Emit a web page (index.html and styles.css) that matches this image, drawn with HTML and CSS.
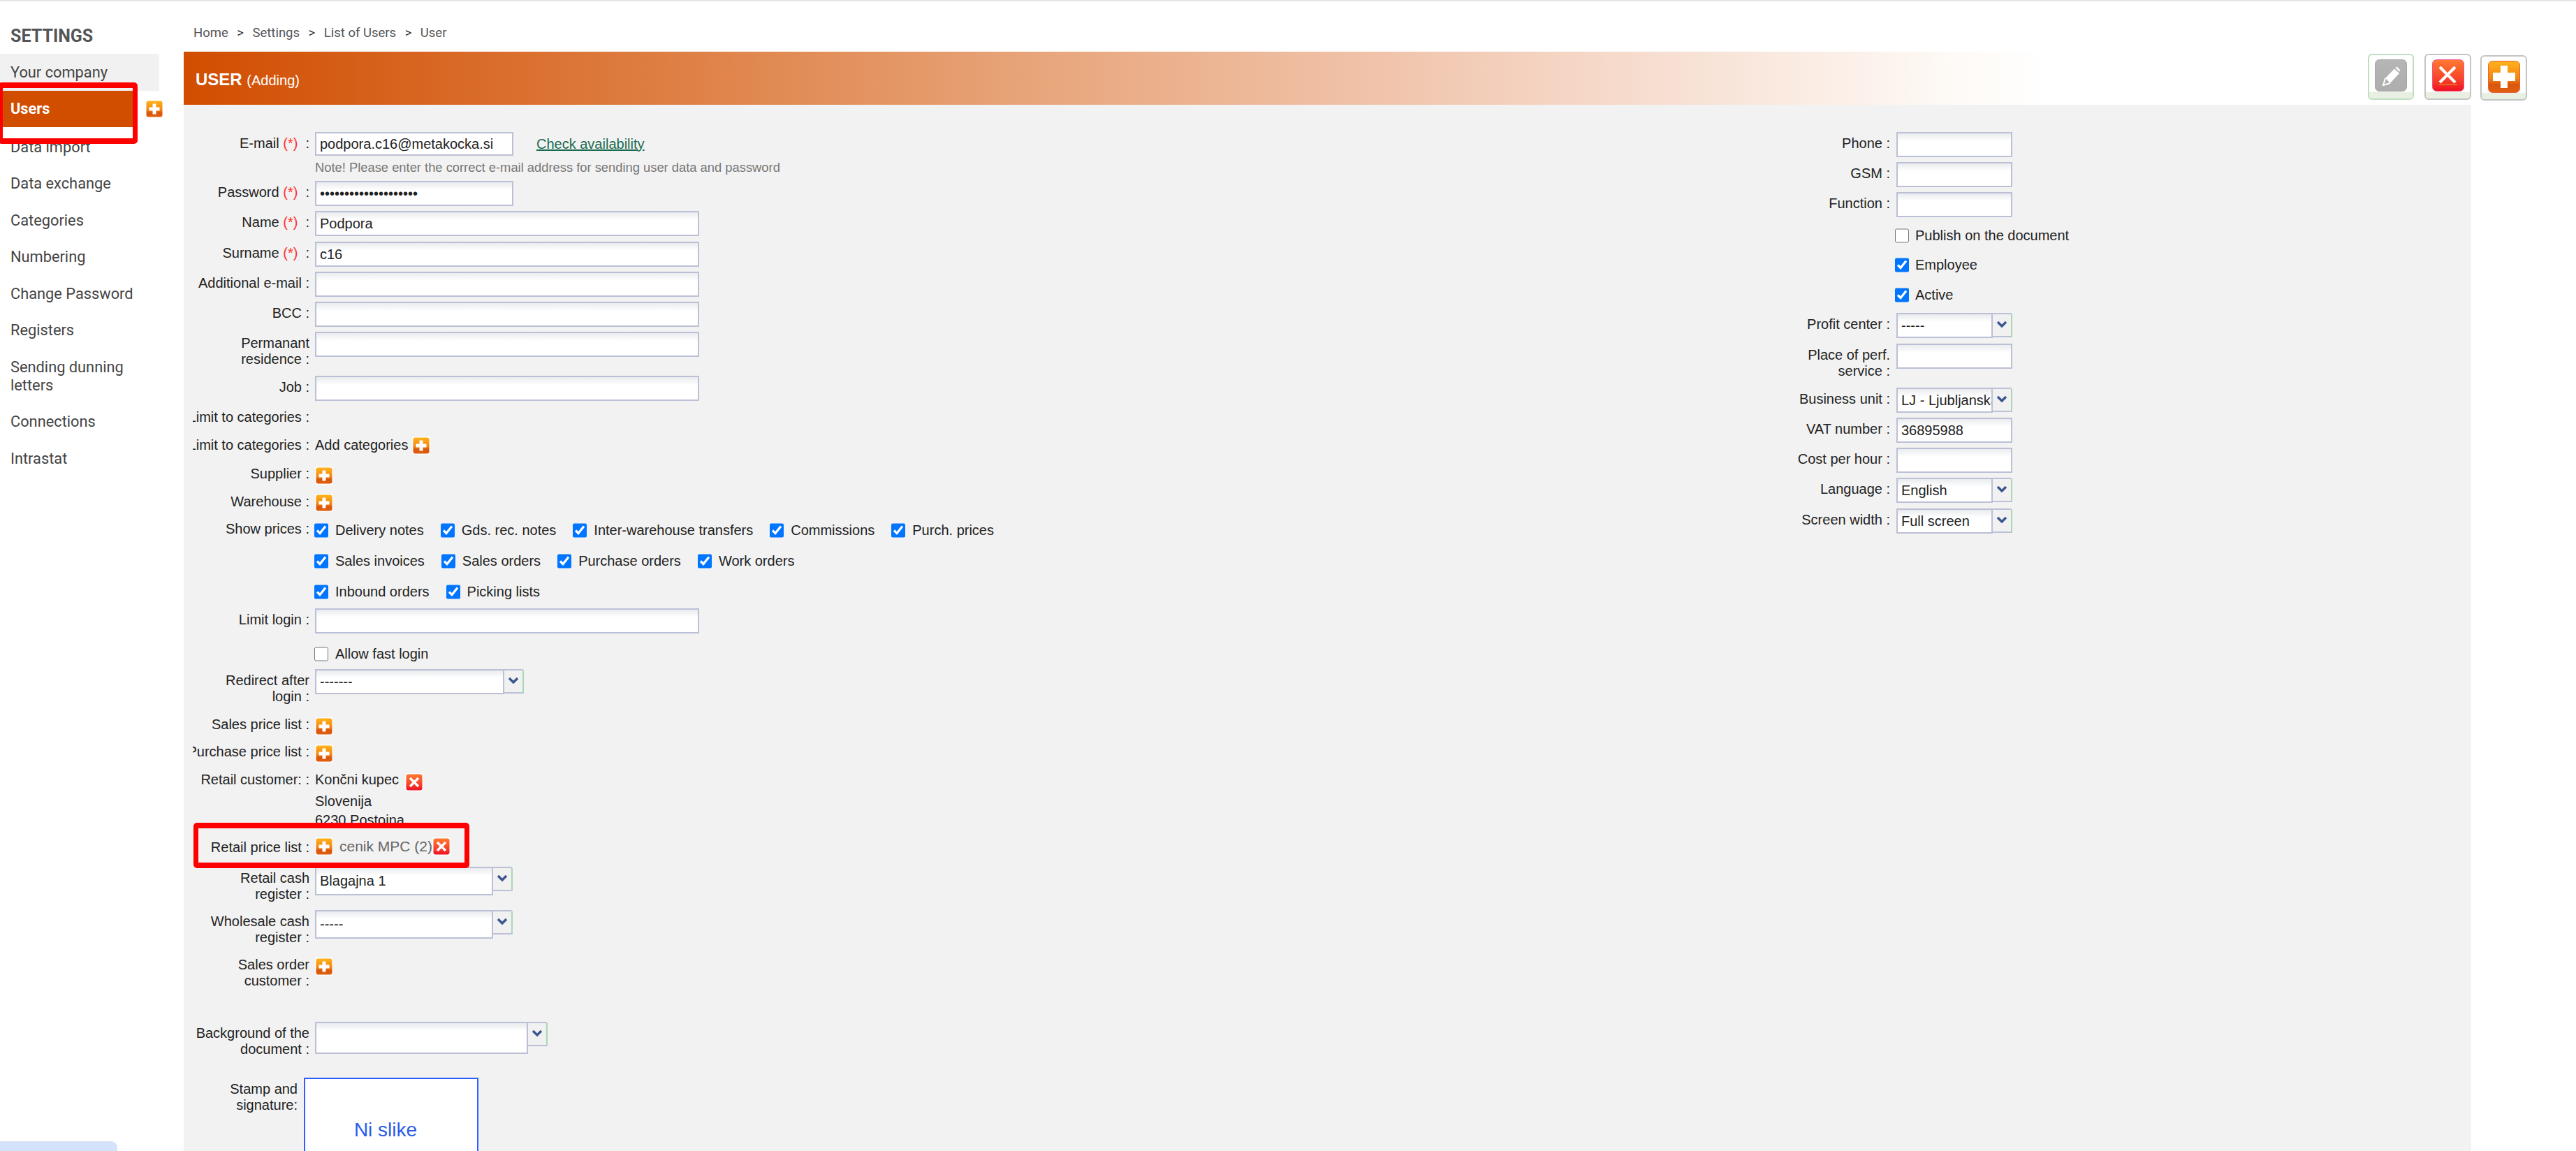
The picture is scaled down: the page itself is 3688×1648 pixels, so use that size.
FILE: index.html
```html
<!DOCTYPE html>
<html lang="en">
<head>
<meta charset="utf-8">
<title>User</title>
<link rel="stylesheet" href="styles.css">
</head>
<body>
<svg class="sprite" aria-hidden="true">
  <defs>
    <linearGradient id="gPlus" x1="0" y1="0" x2="0" y2="1"><stop offset="0" stop-color="#ffb31c"/><stop offset=".55" stop-color="#f28612"/><stop offset=".75" stop-color="#d9560d"/><stop offset="1" stop-color="#e0600f"/></linearGradient>
    <linearGradient id="gX" x1="0" y1="0" x2="0" y2="1"><stop offset="0" stop-color="#ff7a32"/><stop offset=".6" stop-color="#f8452a"/><stop offset="1" stop-color="#ee1024"/></linearGradient>
    <linearGradient id="gGrey" x1="0" y1="0" x2="0" y2="1"><stop offset="0" stop-color="#b6b6b6"/><stop offset="1" stop-color="#adadad"/></linearGradient>
    <symbol id="plus" viewBox="0 0 26 26">
      <rect width="26" height="26" rx="2" fill="#fff" fill-opacity=".8"/>
      <rect x="1.500" y="1.500" width="23" height="23" rx="3" fill="url(#gPlus)"/>
      <path d="M5.500 10.500h5v-5h5v5h5v5h-5v5h-5v-5h-5z" fill="#fff"/>
    </symbol>
    <symbol id="cross" viewBox="0 0 26 26">
      <rect width="26" height="26" rx="2" fill="#fff" fill-opacity=".8"/>
      <rect x="1.500" y="1.500" width="23" height="23" rx="3" fill="url(#gX)"/>
      <path d="M7 7l12 12M19 7L7 19" stroke="#fff" stroke-width="3.400" fill="none"/>
    </symbol>
    <symbol id="chev" viewBox="0 0 16 10">
      <path d="M2 2l6 6 6-6" stroke="#3b568f" stroke-width="3.400" fill="none"/>
    </symbol>
  </defs>
</svg>
<div class="topline"></div>
<div class="page">
  <aside class="side">
    <h2 class="side-title">SETTINGS</h2>
    <nav class="menu">
      <a class="menu-item menu-first">Your company</a>
      <div class="menu-row">
        <a class="menu-item menu-active">Users</a>
        <svg class="ico-side"><use href="#plus"/></svg>
      </div>
      <a class="menu-item">Data import</a>
      <a class="menu-item">Data exchange</a>
      <a class="menu-item">Categories</a>
      <a class="menu-item">Numbering</a>
      <a class="menu-item">Change Password</a>
      <a class="menu-item">Registers</a>
      <a class="menu-item">Sending dunning letters</a>
      <a class="menu-item">Connections</a>
      <a class="menu-item">Intrastat</a>
    </nav>
  </aside>
  <main class="main">
    <div class="crumbs"><span>Home</span><b>&gt;</b><span>Settings</span><b>&gt;</b><span>List of Users</span><b>&gt;</b><span>User</span></div>
    <header class="head">
      <h1 class="head-title">USER <small>(Adding)</small></h1>
      <div class="tools">
        <button class="tool tool-green">
          <svg width="46" height="46" viewBox="0 0 46 46"><rect x="0.500" y="0.500" width="45" height="45" rx="6" fill="url(#gGrey)" stroke="#a5a5a5"/><path d="M15 27L28 13.500l7 6.500L22 34z" fill="#fff"/><path d="M15 27l-3 10 10-3" fill="none" stroke="#fff" stroke-width="2"/><path d="M29.500 12l2-1.500 5 5-1.500 2z" fill="#fff"/></svg>
        </button>
        <button class="tool">
          <svg width="46" height="46" viewBox="0 0 46 46"><rect x="0.500" y="0.500" width="45" height="45" rx="6" fill="url(#gX)" stroke="#f2508a"/><path d="M11 11l22 22M33 11L11 33" stroke="#fff" stroke-width="4" fill="none"/><rect x="10" y="35" width="26" height="1.500" fill="#e8801e"/></svg>
        </button>
        <button class="tool tool-low">
          <svg width="46" height="46" viewBox="0 0 46 46"><rect x="0.500" y="0.500" width="45" height="45" rx="6" fill="url(#gPlus)" stroke="#e8603a"/><path d="M7 17h11V7h10v10h11v12H28v10H18V29H7z" fill="#fff"/></svg>
        </button>
      </div>
    </header>
    <section class="panel">
      <div class="form form-left">
        <label class="lab"><span>E-mail <em>(*)</em> &nbsp;:</span></label>
        <div class="field field-stack">
          <div class="line-email"><div class="inp inp-short inp-email">podpora.c16@metakocka.si</div><a class="link">Check availability</a></div>
          <p class="note">Note! Please enter the correct e-mail address for sending user data and password</p>
        </div>
        <label class="lab"><span>Password <em>(*)</em> &nbsp;:</span></label>
        <div class="field"><div class="inp inp-short inp-pass">••••••••••••••••••••</div></div>
        <label class="lab"><span>Name <em>(*)</em> &nbsp;:</span></label>
        <div class="field"><div class="inp inp-wide">Podpora</div></div>
        <label class="lab"><span>Surname <em>(*)</em> &nbsp;:</span></label>
        <div class="field"><div class="inp inp-wide">c16</div></div>
        <label class="lab"><span>Additional e-mail :</span></label>
        <div class="field"><div class="inp inp-wide"></div></div>
        <label class="lab"><span>BCC :</span></label>
        <div class="field"><div class="inp inp-wide"></div></div>
        <label class="lab"><span>Permanant<br>residence :</span></label>
        <div class="field"><div class="inp inp-wide"></div></div>
        <label class="lab"><span>Job :</span></label>
        <div class="field"><div class="inp inp-wide"></div></div>
        <label class="lab"><span>Limit to categories :</span></label>
        <div class="field"></div>
        <label class="lab"><span>Limit to categories :</span></label>
        <div class="field field-inline"><span class="txt">Add categories</span><svg class="ico ico-cat"><use href="#plus"/></svg></div>
        <label class="lab"><span>Supplier :</span></label>
        <div class="field"><svg class="ico"><use href="#plus"/></svg></div>
        <label class="lab"><span>Warehouse :</span></label>
        <div class="field"><svg class="ico ico-up"><use href="#plus"/></svg></div>
        <label class="lab"><span>Show prices :</span></label>
        <div class="field checks">
          <div class="check-row">
            <label class="chk"><input type="checkbox" checked>Delivery notes</label>
            <label class="chk"><input type="checkbox" checked>Gds. rec. notes</label>
            <label class="chk"><input type="checkbox" checked>Inter-warehouse transfers</label>
            <label class="chk"><input type="checkbox" checked>Commissions</label>
            <label class="chk"><input type="checkbox" checked>Purch. prices</label>
          </div>
          <div class="check-row">
            <label class="chk"><input type="checkbox" checked>Sales invoices</label>
            <label class="chk"><input type="checkbox" checked>Sales orders</label>
            <label class="chk"><input type="checkbox" checked>Purchase orders</label>
            <label class="chk"><input type="checkbox" checked>Work orders</label>
          </div>
          <div class="check-row">
            <label class="chk"><input type="checkbox" checked>Inbound orders</label>
            <label class="chk"><input type="checkbox" checked>Picking lists</label>
          </div>
        </div>
        <label class="lab"><span>Limit login :</span></label>
        <div class="field"><div class="inp inp-wide"></div></div>
        <span class="lab"></span>
        <div class="field checks"><div class="check-row"><label class="chk"><input type="checkbox">Allow fast login</label></div></div>
        <label class="lab"><span>Redirect after<br>login :</span></label>
        <div class="field"><div class="sel"><div class="val val-redirect">-------</div><div class="arrow"><svg class="chev"><use href="#chev"/></svg></div></div></div>
        <label class="lab"><span>Sales price list :</span></label>
        <div class="field"><svg class="ico"><use href="#plus"/></svg></div>
        <label class="lab"><span>Purchase price list :</span></label>
        <div class="field"><svg class="ico"><use href="#plus"/></svg></div>
        <label class="lab"><span>Retail customer: :</span></label>
        <div class="field field-stack">
          <div class="cust-name"><span class="txt">Končni kupec</span><svg class="ico ico-x"><use href="#cross"/></svg></div>
          <div class="cust-line">Slovenija</div>
          <div class="cust-line">6230 Postojna</div>
        </div>
        <label class="lab"><span>Retail price list :</span></label>
        <div class="field field-inline">
          <svg class="ico ico-tight"><use href="#plus"/></svg>
          <span class="txt txt-grey">cenik MPC (2)</span>
          <svg class="ico ico-tight"><use href="#cross"/></svg>
        </div>
        <label class="lab"><span>Retail cash<br>register :</span></label>
        <div class="field"><div class="sel"><div class="val val-cash">Blagajna 1</div><div class="arrow"><svg class="chev"><use href="#chev"/></svg></div></div></div>
        <label class="lab"><span>Wholesale cash<br>register :</span></label>
        <div class="field"><div class="sel"><div class="val val-cash">-----</div><div class="arrow"><svg class="chev"><use href="#chev"/></svg></div></div></div>
        <label class="lab"><span>Sales order<br>customer :</span></label>
        <div class="field"><svg class="ico"><use href="#plus"/></svg></div>
        <label class="lab"><span>Background of the<br>document :</span></label>
        <div class="field"><div class="sel"><div class="val val-bg"></div><div class="arrow"><svg class="chev"><use href="#chev"/></svg></div></div></div>
        <div class="stamp-row">
          <label class="lab lab-stamp"><span>Stamp and<br>signature:</span></label>
          <div class="stamp">Ni slike</div>
        </div>
      </div>
      <div class="form form-right">
        <label class="lab"><span>Phone :</span></label>
        <div class="field"><div class="inp inp-side"></div></div>
        <label class="lab"><span>GSM :</span></label>
        <div class="field"><div class="inp inp-side"></div></div>
        <label class="lab"><span>Function :</span></label>
        <div class="field"><div class="inp inp-side"></div></div>
        <span class="lab"></span>
        <div class="field side-check"><label class="chk"><input type="checkbox">Publish on the document</label></div>
        <span class="lab"></span>
        <div class="field side-check"><label class="chk"><input type="checkbox" checked>Employee</label></div>
        <span class="lab"></span>
        <div class="field side-check"><label class="chk"><input type="checkbox" checked>Active</label></div>
        <label class="lab"><span>Profit center :</span></label>
        <div class="field"><div class="sel"><div class="val val-side">-----</div><div class="arrow arrow-side"><svg class="chev"><use href="#chev"/></svg></div></div></div>
        <label class="lab"><span>Place of perf.<br>service :</span></label>
        <div class="field"><div class="inp inp-side"></div></div>
        <label class="lab"><span>Business unit :</span></label>
        <div class="field"><div class="sel"><div class="val val-side">LJ - Ljubljanska</div><div class="arrow arrow-side"><svg class="chev"><use href="#chev"/></svg></div></div></div>
        <label class="lab"><span>VAT number :</span></label>
        <div class="field"><div class="inp inp-side">36895988</div></div>
        <label class="lab"><span>Cost per hour :</span></label>
        <div class="field"><div class="inp inp-side"></div></div>
        <label class="lab"><span>Language :</span></label>
        <div class="field"><div class="sel"><div class="val val-side">English</div><div class="arrow arrow-side"><svg class="chev"><use href="#chev"/></svg></div></div></div>
        <label class="lab"><span>Screen width :</span></label>
        <div class="field"><div class="sel"><div class="val val-side">Full screen</div><div class="arrow arrow-side"><svg class="chev"><use href="#chev"/></svg></div></div></div>
      </div>
    </section>
  </main>
</div>
<div class="mark mark-users"></div>
<div class="mark mark-price"></div>
<div class="chat-tab"></div>
</body>
</html>
```
FILE: styles.css
```css
* { box-sizing: border-box; }
html, body { margin: 0; height: 100%; }
body {
  position: relative;
  height: 1648px;
  overflow: hidden;
  background: #fff;
  font-family: "Liberation Sans", Arial, sans-serif;
  font-size: 20px;
  color: #222;
}
.sprite { display: block; width: 0; height: 0; }
.topline { height: 2px; background: #e6e6e6; }
.page { display: flex; height: 1646px; }

/* Sidebar */
.side { flex: 0 0 263px; font-family: Roboto, sans-serif; }
.side-title {
  margin: 0;
  height: 75px;
  padding: 36px 0 0 15px;
  font-size: 25px;
  line-height: 28px;
  font-weight: 700;
  color: #555;
}
.menu { display: flex; flex-direction: column; width: 228px; }
.menu-item {
  display: block;
  padding: 13.25px 15px;
  font-size: 21.8px;
  line-height: 26px;
  color: #444;
}
.menu-first { padding: 13.500px 15px; background: #f1f1f1; }
.menu-row { display: flex; align-items: flex-start; gap: 15px; height: 54.500px; }
.menu-active {
  flex: 0 0 193px;
  height: 52px;
  background: #d14d00;
  color: #fff;
  font-weight: 700;
}
.ico-side { flex: none; width: 26px; height: 26px; margin-top: 13px; }

/* Main */
.main { flex: 1; min-width: 0; display: flex; flex-direction: column; }
.crumbs {
  height: 72px;
  padding: 33px 0 0 14px;
  display: flex;
  gap: 12.500px;
  font-family: Roboto, sans-serif;
  font-size: 18.500px;
  line-height: 24px;
  color: #555;
}
.crumbs b { font-weight: 400; color: #333; }
.head {
  height: 76px;
  flex: none;
  display: flex;
  justify-content: space-between;
  align-items: flex-start;
  padding: 3px 70px 0 17px;
  background: linear-gradient(90deg, #d14d00 0, #df8248 21.5%, #e8a67c 36%, #f1c5ad 50.700%, #f7e0d3 62.400%, #fefaf6 74%, #fff 78%);
}
.head-title {
  margin: 0;
  padding-top: 23px;
  font-size: 24px;
  line-height: 28px;
  font-weight: 700;
  color: #fff;
}
.head-title small { font-size: 20px; font-weight: 400; }
.tools { display: flex; align-items: flex-start; gap: 13px; }
.tool {
  display: flex;
  align-items: center;
  justify-content: center;
  width: 67px;
  height: 66px;
  padding: 0 0 4px;
  border: 2px solid #c4c4c4;
  border-radius: 6px;
  background: linear-gradient(180deg, #fff 0, #fff 84%, #e9efe3 86%, #e9efe3 100%);
}
.tool-green { width: 66px; margin-right: 2px; border-color: #bfe0c0; }
.tool-low { margin-top: 2px; height: 65px; }

.panel {
  flex: 1;
  width: 3275px;
  min-height: 0;
  display: flex;
  padding: 39px 0 0 13px;
  background: #f2f2f2;
  overflow: hidden;
}

/* Forms */
.form { display: grid; flex: none; align-content: start; }
.form-left {
  width: 2280px;
  grid-template-columns: 167px 1fr;
  column-gap: 8px;
  grid-template-rows: 70px 43px 44px 43px 43px 43px 63px 43px 40px 41px 40px 39px 130px 47px 40px 63px 39px 40px 97px 44px 62px 62px 98px 80px auto;
}
.form-right {
  width: 325px;
  grid-template-columns: 150px 1fr;
  column-gap: 9px;
  grid-template-rows: 43px 43px 41px 42px 43px 47px 44px 63px 43px 43px 43px 44px 40px;
}
.lab {
  display: flex;
  justify-content: flex-end;
  overflow: hidden;
  padding-top: 5px;
  font-size: 20px;
  line-height: 23px;
  white-space: nowrap;
  text-align: right;
  color: #222;
}
.lab em { font-style: normal; color: #f33; }
.lab span { flex: none; }
.field { min-width: 0; }
.field-stack { display: flex; flex-direction: column; }
.field-inline { display: flex; align-items: flex-start; }
.txt { padding-top: 5px; line-height: 23px; white-space: nowrap; }
.txt-grey { margin: 0 0 0 9px; padding-top: 3px; font-size: 21px; color: #666; }

.inp {
  height: 36px;
  padding: 4px 0 0 5px;
  line-height: 24px;
  border: 2px solid #bcc0d6;
  background: linear-gradient(180deg, #e9ebee 0, #fff 11px);
  white-space: nowrap;
  color: #222;
}
.inp-short { width: 284px; }
.inp-wide { width: 550px; }
.inp-side { width: 166px; }
.inp-email { background: #fff; height: 34px; padding-top: 3px; }
.line-email { display: flex; align-items: center; gap: 33px; }
.link { color: #1a6b50; text-decoration: underline; }
.note { margin: 7px 0 0; font-size: 18.350px; line-height: 20px; color: #777; white-space: nowrap; }

.ico { display: block; flex: none; width: 26px; height: 26px; margin-top: 6px; }
.ico-up { margin-top: 5px; }
.ico-cat { margin: 4px 0 0 6px; }
.ico-x { margin: 7px 0 0 9px; }
.ico-tight { margin-top: 2px; }

.checks { display: flex; flex-direction: column; gap: 8px; margin-left: -1px; }
.check-row { display: flex; gap: 24px; height: 36px; align-items: center; }
.chk { display: flex; align-items: center; gap: 10px; white-space: nowrap; color: #222; }
.chk input { width: 20px; height: 21px; margin: 0; flex: none; }
.side-check { display: flex; align-items: center; height: 42px; margin-left: -2px; }
.side-check .chk { gap: 9px; }

.sel { display: flex; align-items: flex-start; }
.val {
  height: 36px;
  padding: 4px 3px 0 5px;
  line-height: 24px;
  border: 2px solid #bcc0d6;
  background: linear-gradient(180deg, #e9ebee 0, #fff 11px);
  white-space: nowrap;
  overflow: hidden;
  color: #222;
}
.val-redirect { width: 271px; }
.val-cash { width: 255px; height: 41px; padding-top: 6px; }
.val-bg { width: 305px; height: 46px; }
.val-side { width: 138px; padding-right: 4px; }
.arrow {
  display: flex;
  align-items: center;
  justify-content: center;
  flex: none;
  width: 29px;
  height: 35px;
  margin-left: -1px;
  border: 2px solid #bcc0d6;
  border-left-width: 1px;
  border-right-color: #a9d9b4;
  border-top-right-radius: 3px;
  background: #f1f1f1;
}
.chev { width: 16px; height: 10px; margin-top: -3px; }

.cust-name { display: flex; height: 34px; }
.cust-line { height: 27px; line-height: 27px; white-space: nowrap; }

.stamp-row { grid-column: 1 / -1; display: flex; gap: 9px; }
.lab-stamp { flex: 0 0 150px; }
.stamp {
  width: 250px;
  height: 150px;
  padding-right: 16px;
  display: flex;
  align-items: center;
  justify-content: center;
  border: 2px solid #2f5fff;
  background: #fff;
  font-size: 28px;
  color: #2a5ce8;
}

/* Overlays */
.mark { position: absolute; border-style: solid; border-color: #f00; border-width: 8px 7px; border-radius: 5px; }
.mark-users { left: -3px; top: 118px; width: 200px; height: 88px; }
.mark-price { left: 277px; top: 1178px; width: 395px; height: 65px; }
.chat-tab {
  position: absolute;
  left: 0;
  bottom: 0;
  width: 168px;
  height: 14px;
  background: #d4e3fb;
  border-top: 1px solid #dde3ea;
  border-top-right-radius: 9px;
}
```
